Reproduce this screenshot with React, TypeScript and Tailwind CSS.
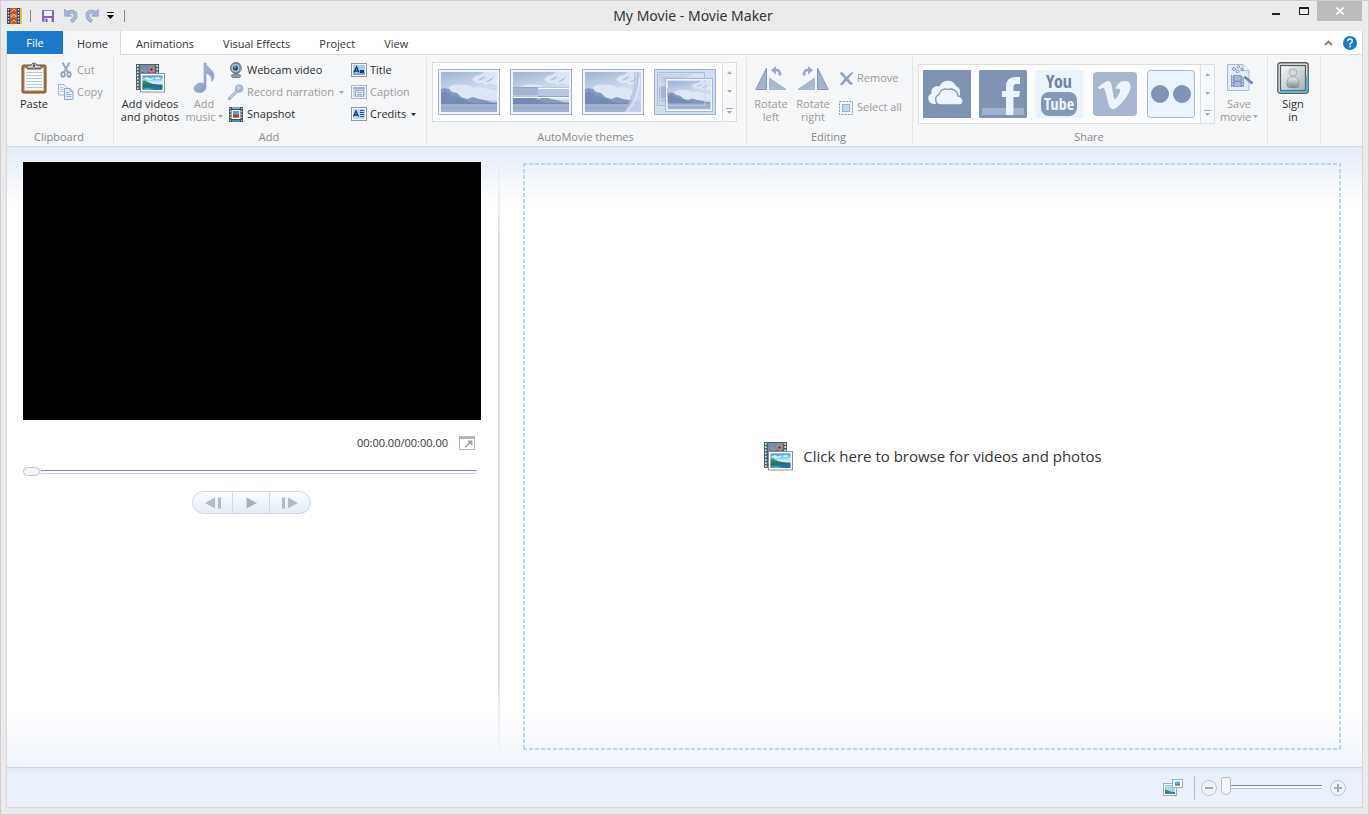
import React from "react";

type Kids = { children?: React.ReactNode };

/* ---------- icons ---------- */

function AppIcon() {
  return (
    <svg width="15" height="16" viewBox="0 0 15 16" aria-hidden="true">
      <rect width="13" height="16" fill="#1d4f86" />
      <rect x="13" width="2" height="16" fill="#f5b93c" />
      <rect x="3" y="0" width="7" height="5" fill="#d8501c" />
      <rect x="3" y="5.5" width="7" height="5" fill="#e8742a" />
      <rect x="3" y="11" width="7" height="5" fill="#d8501c" />
      <path d="M4 4l3-3 2 2M4 9l3-3 2 3M4 15l3-3 2 2" stroke="#ffc04d" fill="none" />
      <path d="M1.5 1v15M11.5 1v15" stroke="#cfe2f5" strokeWidth="1.4" strokeDasharray="1.4 1.6" />
    </svg>
  );
}

function SaveIcon() {
  return (
    <svg width="12" height="12" viewBox="0 0 12 12" aria-hidden="true">
      <path d="M0 0h12v12H1l-1-1z" fill="#8468b5" />
      <rect x="2" y="0.8" width="8" height="5.2" fill="#f2effa" />
      <rect x="2.5" y="8" width="7" height="4" fill="#f2effa" />
      <rect x="3.5" y="8.6" width="2" height="3.4" fill="#7558a8" />
    </svg>
  );
}

function UndoIcon({ flip }: { flip?: boolean }) {
  return (
    <svg width="14" height="15" viewBox="0 0 14 15" className={flip ? "-scale-x-100" : ""} aria-hidden="true">
      <path d="M3 5.500C6 2.500 11.500 3 11.500 7.500c0 3-2 4.500-4.500 5.900" fill="none" stroke="#8fa2c4" strokeWidth="3.800" />
      <path d="M3 5.500C6 2.500 11.500 3 11.500 7.500c0 3-2 4.500-4.500 5.900" fill="none" stroke="#a9bad7" strokeWidth="2.400" />
      <path d="M.6 1v7.200h7z" fill="#a3b4d2" stroke="#8fa2c4" strokeWidth=".7" />
    </svg>
  );
}

function PasteIcon() {
  return (
    <svg width="26" height="32" viewBox="0 0 26 32" aria-hidden="true">
      <rect x="1" y="3" width="24" height="28" rx="1.500" fill="#a9743a" stroke="#7d5223" />
      <rect x="3.500" y="6" width="19" height="22.500" fill="#fbfdff" stroke="#d9c3a0" strokeWidth=".6" />
      <path d="M5 10.500h16M5 13.500h16M5 16.500h16M5 19.500h16M5 22.500h16M5 25.500h16" stroke="#b7c8db" />
      <path d="M6 7V5q0-1.500 2-1.500h2Q10.500 1 13 1t3 2.500h2q2 0 2 1.500v2z" fill="#d6dade" stroke="#5b6168" />
      <circle cx="13" cy="3.600" r="1.300" fill="#4a4f55" />
      <path d="M7 6.200h12" stroke="#4a4f55" />
    </svg>
  );
}

function CutIcon() {
  return (
    <svg width="16" height="16" viewBox="0 0 16 16" aria-hidden="true">
      <path d="M4.500.5L10 10.500M11.500.5L6 10.500" stroke="#9aacc9" strokeWidth="2" fill="none" />
      <ellipse cx="5" cy="12.500" rx="1.700" ry="2.300" fill="none" stroke="#8c9fc0" strokeWidth="1.700" />
      <ellipse cx="11" cy="12.500" rx="1.700" ry="2.300" fill="none" stroke="#8c9fc0" strokeWidth="1.700" />
    </svg>
  );
}

function CopyIcon() {
  return (
    <svg width="16" height="16" viewBox="0 0 16 16" aria-hidden="true">
      <path d="M.5.5H6L9 3.500V11H.5z" fill="#eef3fb" stroke="#a3b4d2" />
      <path d="M2 3.500h3M2 5.500h5M2 7.500h5" stroke="#b5c3dc" />
      <path d="M6.500 4.500H12l3 3v8H6.500z" fill="#e6edf9" stroke="#93a6c9" />
      <path d="M12 4.500v3h3M8 8.500h3M8 10.500h5.500M8 12.500h5.500" stroke="#9fb0cf" fill="none" />
    </svg>
  );
}

function FilmPhotoIcon() {
  return (
    <svg width="29" height="29" viewBox="0 0 29 29" aria-hidden="true">
      <defs>
        <linearGradient id="fpSky" x1="0" y1="0" x2="0" y2="1">
          <stop offset="0" stopColor="#3b90e2" />
          <stop offset=".45" stopColor="#c6ebfb" />
          <stop offset="1" stopColor="#eafaff" />
        </linearGradient>
        <linearGradient id="fpHill" x1="0" y1="0" x2="0" y2="1">
          <stop offset="0" stopColor="#4b9a78" />
          <stop offset="1" stopColor="#1d5a56" />
        </linearGradient>
      </defs>
      <rect x="0" y="0" width="23" height="26" fill="#4c6068" />
      <path d="M1.800 1v25M21.200 1v8" stroke="#d8ecef" strokeWidth="1.600" strokeDasharray="1.700 1.500" />
      <rect x="4" y="1" width="15" height="9" fill="#6d8cb8" />
      <path d="M4 7l4-3.500 4 3v4H4z" fill="#8294a8" />
      <circle cx="15.500" cy="5.500" r="2.800" fill="#d98a3c" />
      <circle cx="15.500" cy="5.500" r="1.300" fill="#48348a" />
      <path d="M4 10l2-2 4 1 3-1 3 1 3-1v2z" fill="#94483a" />
      <rect x="4.500" y="9.500" width="24" height="18.500" fill="#fff" stroke="#8b9297" />
      <rect x="6.500" y="11.500" width="20" height="14.500" fill="url(#fpSky)" />
      <path d="M8 14.500q3-2 5-.5t4-1q2 1-1 2.500t-8-1zM18 14q4-2 7 0-3 2-7 0z" fill="#f0fbff" opacity=".85" />
      <path d="M6.500 16.500q2-.8 4 .7 3 1.800 6 2.500t10 .8v3h-20z" fill="url(#fpHill)" />
      <path d="M6.500 22.800q8-.8 20-.3v3.500h-20z" fill="#217a9f" />
      <path d="M6.500 25.200q6-2 12 .8h-12z" fill="#57b4d2" />
    </svg>
  );
}

function NoteIcon() {
  return (
    <svg width="22" height="32" viewBox="0 0 22 32" aria-hidden="true">
      <defs>
        <linearGradient id="note" x1="0" y1="0" x2="1" y2="1">
          <stop offset="0" stopColor="#b5c3de" />
          <stop offset="1" stopColor="#7e92b8" />
        </linearGradient>
      </defs>
      <path
        d="M11 1h2c.5 4.500 8 7 8 12.500 0 2.500-1 4.500-2.500 6C19.500 13 15 12 13 11.500V25c0 3.500-3 5.500-6.500 5.500C3 30.500 1 29 1 26.500 1 23.500 4.500 21 8 21c1.200 0 2.200.2 3 .7z"
        fill="url(#note)"
        stroke="#8fa1c3"
        strokeWidth=".6"
      />
    </svg>
  );
}

function WebcamIcon() {
  return (
    <svg width="16" height="16" viewBox="0 0 16 16" aria-hidden="true">
      <path d="M3 13.500q5-3.500 10 0l-1.500 2h-7z" fill="#8c99a6" stroke="#56626e" strokeWidth=".6" />
      <circle cx="8" cy="6" r="5.600" fill="#6f8599" stroke="#4b5c6c" strokeWidth=".6" />
      <circle cx="7.500" cy="6" r="4" fill="#b9cbdb" />
      <circle cx="7.500" cy="6" r="2.600" fill="#2f4860" />
      <circle cx="7" cy="5.300" r="1" fill="#7cc0ee" />
      <path d="M12 2q3 3 0 8" fill="none" stroke="#a7b4c0" />
    </svg>
  );
}

function MicIcon() {
  return (
    <svg width="16" height="16" viewBox="0 0 16 16" aria-hidden="true">
      <path d="M1.200 14.800L9 7" stroke="#93a6c9" strokeWidth="3" strokeLinecap="round" />
      <path d="M1.500 14.500L9 7" stroke="#c9d6ec" strokeWidth="1.200" />
      <circle cx="11.200" cy="4.600" r="3.800" fill="#a9b9d8" stroke="#93a6c9" strokeWidth=".8" />
      <circle cx="10.600" cy="3.800" r="1.800" fill="#c6d3ea" />
    </svg>
  );
}

function SnapshotIcon() {
  return (
    <svg width="14" height="15" viewBox="0 0 14 15" aria-hidden="true">
      <rect width="14" height="15" fill="#3c474c" />
      <path d="M1.300.8v14M12.700.8v14" stroke="#cfdfe3" strokeWidth="1.200" strokeDasharray="1.500 1.500" />
      <rect x="3" y="0" width="8" height="2" fill="#7aa7bd" />
      <rect x="2.500" y="3" width="9" height="9" fill="#eaf3fa" />
      <rect x="4" y="4" width="6" height="6.500" fill="#5aa2dd" />
      <path d="M4 8.500l2-2 2 1.500 2-1v3.500H4z" fill="#b7422b" />
      <rect x="3" y="12.800" width="8" height="2.200" fill="#3f8fc2" />
    </svg>
  );
}

function TitleIcon() {
  return (
    <svg width="16" height="14" viewBox="0 0 16 14" aria-hidden="true">
      <rect x=".5" y=".5" width="15" height="13" fill="#fff" stroke="#8e979f" />
      <rect x="2" y="2" width="12" height="10" fill="#9fcdf5" />
      <path d="M3 9.500L5.500 4 8 9.500M4 8h3" fill="none" stroke="#123a72" strokeWidth="1.400" />
      <path d="M9 7h4v3H9z" fill="#123a72" />
      <path d="M2 11h12" stroke="#3f86cd" />
    </svg>
  );
}

function CaptionIcon() {
  return (
    <svg width="16" height="14" viewBox="0 0 16 14" aria-hidden="true">
      <rect x=".5" y=".5" width="15" height="13" fill="#f3f6fc" stroke="#a7b5cf" />
      <rect x="2" y="2" width="12" height="10" fill="#c6d3ea" />
      <path d="M2 3h12" stroke="#93a6c9" strokeWidth="1.500" />
      <rect x="4.500" y="5.500" width="8" height="5.500" fill="#eef3fb" stroke="#98aacb" />
      <path d="M6 7.500h5M6 9.500h5" stroke="#98aacb" />
    </svg>
  );
}

function CreditsIcon() {
  return (
    <svg width="16" height="14" viewBox="0 0 16 14" aria-hidden="true">
      <rect x=".5" y=".5" width="15" height="13" fill="#fff" stroke="#8e979f" />
      <rect x="2" y="2" width="12" height="10" fill="#b4daf8" />
      <path d="M2.500 9.500L5 4l2.500 5.500M3.500 8h3" fill="none" stroke="#123a72" strokeWidth="1.300" />
      <path d="M9 3.500h4M9 5.500h4M9 7.500h4M9 9.500h4" stroke="#23518f" />
    </svg>
  );
}

type ThemeKind = "plain" | "split" | "curl" | "stack";

function Scene({ id }: { id: string }) {
  return (
    <>
      <rect width="56" height="40" fill={`url(#${id}-sky)`} />
      <g clipPath={`url(#${id}-clip)`}>
        <g filter={`url(#${id}-soft)`}>
          <path d="M31 7q3-4 8-4 5-5 10-4h9v13q-5 2-9-1-4 3-8 0-7 1-10-4z" fill="#eaf0fb" opacity=".7" />
          <path d="M38 8l6-3M46 10l6-4" stroke="#aebede" strokeWidth="1.500" />
          <path d="M8 15q6-4 12-2 8-1 12 3 8-2 14 1 6 0 12 3v8H8z" fill="#e3ebf8" opacity=".8" />
          <path d="M-2 18l5-2 5 1 3 3 5 1 4 4 6 2 6-2 6 2 6 1 6 2 8 1v2H-2z" fill="#8598c0" />
          <path d="M-2 21l7-1 6 4 8 2 8 3 6 2-36 1z" fill="#6f84b2" opacity=".7" />
          <path d="M-2 31.500h60V42H-2z" fill="#a3b2d2" />
          <path d="M-2 31.500h60" stroke="#7488b4" strokeWidth="1" />
          <path d="M-2 36h60" stroke="#93a4c8" strokeWidth="1" />
        </g>
      </g>
    </>
  );
}

function ThemeThumb({ kind }: { kind: ThemeKind }) {
  const id = `theme-${kind}`;
  return (
    <svg width="62" height="46" viewBox="0 0 62 46" aria-hidden="true">
      <defs>
        <linearGradient id={`${id}-sky`} x1="0" y1="0" x2=".3" y2="1">
          <stop offset="0" stopColor="#a0b1d2" />
          <stop offset=".55" stopColor="#d2dcef" />
          <stop offset="1" stopColor="#c3cfe6" />
        </linearGradient>
        <clipPath id={`${id}-clip`}>
          <rect width="56" height="40" />
        </clipPath>
        <filter id={`${id}-soft`}>
          <feGaussianBlur stdDeviation=".6" />
        </filter>
      </defs>
      <rect x=".5" y=".5" width="61" height="45" fill={kind === "stack" ? "#d2def1" : "#edf3fe"} stroke="#a0b2d0" />
      {kind !== "stack" && (
        <g transform="translate(3 3)">
          <Scene id={id} />
        </g>
      )}
      {kind === "split" && (
        <>
          <rect x="3" y="18" width="56" height="10" fill="#b9c7e0" />
          <rect x="3" y="18" width="25" height="8" fill="#a5b4d3" />
          <path d="M28 19.500h31M3 28.500h56" stroke="#f4f8ff" />
          <path d="M3 18.500h25M28 27.500h31" stroke="#93a5cb" />
        </>
      )}
      {kind === "curl" && (
        <>
          <path d="M54 3Q54 27 42 43h17V3z" fill="#c7d4ec" opacity=".85" />
          <path d="M56 3Q56 27 42 43M53 3q1 22-11 40" fill="none" stroke="#a9b8d8" />
          <path d="M58 8q-1 22-13 35" fill="none" stroke="#e8effc" />
        </>
      )}
      {kind === "stack" && (
        <>
          <g transform="translate(5 5) scale(.82 .74)" opacity=".5">
            <Scene id={id} />
          </g>
          <path d="M3.500 3.500h47v33h-47z" fill="none" stroke="#abbbdc" />
          <path d="M6.500 6.500h41v27h-41z" fill="none" stroke="#dfe8f8" opacity=".6" />
          <g transform="translate(14 12) scale(.76 .7)">
            <Scene id={id} />
          </g>
          <rect x="12.500" y="10.500" width="45" height="31" fill="none" stroke="#eef4ff" strokeWidth="1.500" />
          <rect x="11.500" y="9.500" width="47" height="33" fill="none" stroke="#9aacd1" strokeWidth=".8" />
          <path d="M14 36.500h37V12" fill="none" stroke="#c6d3ea" opacity=".7" />
        </>
      )}
    </svg>
  );
}

function RotateIcon({ right }: { right?: boolean }) {
  return (
    <svg width="32" height="26" viewBox="0 0 32 26" className={right ? "-scale-x-100" : ""} aria-hidden="true">
      <path d="M.8 24.500L11.500 3v21.500z" fill="#a3b3d1" stroke="#8497bb" />
      <path d="M14.500 13v11.500H31z" fill="#a9b9d6" stroke="#9aabcb" strokeWidth=".8" />
      <path d="M20 5q5.500-.5 5 5.500" fill="none" stroke="#97a9ca" strokeWidth="2.800" />
      <path d="M16 5.200L21 1v8.500z" fill="#97a9ca" />
    </svg>
  );
}

function RemoveIcon() {
  return (
    <svg width="15" height="15" viewBox="0 0 15 15" aria-hidden="true">
      <path d="M.5 2Q3 .2 4.500 2.500L7.500 6Q10.500 2 14 .8q.6.700 0 1.400Q11 5 9.300 7.800q2 3 4.700 4.700-1.500 2.300-3.500.7L7.400 9.800 3.500 14Q1.500 14.800.8 13.500 3.500 11 5.500 7.600z" fill="#8fa2c4" />
    </svg>
  );
}

function SelectAllIcon() {
  return (
    <svg width="14" height="14" viewBox="0 0 14 14" aria-hidden="true">
      <rect x=".5" y=".5" width="13" height="13" fill="none" stroke="#8093b8" strokeDasharray="2 1.200" />
      <rect x="3.500" y="3.500" width="7" height="7" fill="#c7d6f0" stroke="#9db0d3" />
    </svg>
  );
}

function CloudTile() {
  return (
    <svg width="48" height="48" viewBox="0 0 48 48" aria-hidden="true">
      <rect width="48" height="48" fill="#8092b4" />
      <path d="M13 34H10.500a5.500 5.500 0 0 1-2-10.500 6 6 0 0 1 8-7 9 9 0 0 1 16.500-.5 7 7 0 0 1 4 8V34z" fill="#edf4ff" />
      <path d="M17.500 35a5.500 5.500 0 0 1-1.500-10.500 6.500 6.500 0 0 1 9-5 7.500 7.500 0 0 1 10 6.500 5 5 0 0 1 3 9z" fill="#edf4ff" stroke="#8092b4" strokeWidth="1.300" />
    </svg>
  );
}

function FacebookTile() {
  return (
    <svg width="48" height="48" viewBox="0 0 48 48" aria-hidden="true">
      <rect width="48" height="48" rx="1.500" fill="#8294b6" />
      <rect x="3" y="38" width="42" height="7" fill="#a3b2cd" />
      <path d="M27 45V27h-4v-6h4v-4q0-10 9-10h5v7h-4q-2.500 0-2.500 3v4h6.500l-1 6h-5.500v18z" fill="#edf4ff" />
    </svg>
  );
}

function YouTubeTile() {
  return (
    <span className="flex h-12 w-12 flex-col items-center bg-[#ebf3ff] font-['Open_Sans_Condensed','Liberation_Sans_Narrow',sans-serif] font-bold">
      <span className="h-[22px] text-[18px] leading-[22px] text-[#7083a8]">You</span>
      <span className="flex h-6 w-9 items-center justify-center rounded-lg bg-[#8698b9] text-[16px] leading-[22px] text-[#edf4ff]">
        Tube
      </span>
    </span>
  );
}

function VimeoTile() {
  return (
    <svg width="44" height="44" viewBox="0 0 44 44" aria-hidden="true">
      <rect width="44" height="44" rx="4" fill="#a7b6d1" />
      <path
        d="M5 15.500l1.500 2q2.500-1.700 3.500-1.700c2 0 3 7 4.500 12.500 1.300 5 2.500 9 5.500 9 5 0 17-15 17.500-21.500C38 10 35 9 31.500 9c-5.500.2-8 4.500-9 8 3.500-1.500 5.500.3 4.300 3.200-1 2.500-3.500 7-4.800 7s-2-6-2.800-11C18.500 12 18 8.500 14.500 9 11.500 9.500 8 13 5 15.500z"
        fill="#edf4ff"
      />
    </svg>
  );
}

function FlickrTile() {
  return (
    <svg width="48" height="48" viewBox="0 0 48 48" aria-hidden="true">
      <rect x=".5" y=".5" width="47" height="47" rx="3" fill="#ebf3ff" stroke="#a5b8d6" />
      <circle cx="13" cy="24" r="9" fill="#8193b6" />
      <circle cx="35" cy="24" r="9" fill="#8193b6" />
    </svg>
  );
}

function SaveMovieIcon() {
  return (
    <svg width="28" height="30" viewBox="0 0 28 30" aria-hidden="true">
      <path d="M2.500 1.500H18l6 6v20H2.500z" fill="#e3ecf9" stroke="#a9bad8" />
      <path d="M18 1.500v6h6" fill="#f5f9ff" stroke="#a9bad8" />
      <rect x="6" y="12" width="13" height="12" fill="#8496bb" />
      <path d="M7.500 12v12M17.500 12v12" stroke="#dfe9f8" strokeWidth="1.300" strokeDasharray="1.400 1.400" />
      <rect x="9.500" y="13" width="6" height="4.500" fill="#a9b9d8" />
      <rect x="9.500" y="19" width="6" height="4.500" fill="#a9b9d8" />
      <path d="M18 12.500l9.500 8" stroke="#7286ad" strokeWidth="2.600" />
      <path d="M17 11.500l2.500 2" stroke="#f0f5ff" strokeWidth="2.400" />
      <g fill="none" stroke="#8195bd" strokeWidth="1">
        <circle cx="9" cy="6" r="1.500" />
        <circle cx="13.500" cy="3.800" r="1.200" />
        <circle cx="12.500" cy="8.500" r="1.500" />
        <circle cx="17" cy="6.500" r="1.300" />
      </g>
    </svg>
  );
}

function SignInIcon() {
  return (
    <svg width="32" height="32" viewBox="0 0 32 32" aria-hidden="true">
      <defs>
        <linearGradient id="userBg" x1="0" y1="0" x2="1" y2="1">
          <stop offset="0" stopColor="#f6f7f8" />
          <stop offset="1" stopColor="#a9b2b7" />
        </linearGradient>
        <linearGradient id="user" x1="0" y1="0" x2="0" y2="1">
          <stop offset="0" stopColor="#eceff1" />
          <stop offset="1" stopColor="#7d878d" />
        </linearGradient>
      </defs>
      <rect x=".8" y=".8" width="30.400" height="30.400" rx="2.500" fill="#dfe2e4" stroke="#5d6468" strokeWidth="1.400" />
      <rect x="3.500" y="3.500" width="25" height="25" fill="url(#userBg)" stroke="#555c60" strokeWidth="1.200" />
      <path d="M3 29.500h26.500V14" fill="none" stroke="#37c3dc" strokeWidth="1.400" />
      <path d="M10.500 25q-2-5 .5-8 2-2 5-2t5 2q2.500 3 .5 8-5.500 2-11 0z" fill="url(#user)" stroke="#838d93" strokeWidth=".6" />
      <circle cx="16" cy="10.500" r="3.800" fill="#d3d8dc" stroke="#838d93" strokeWidth=".6" />
    </svg>
  );
}

function FullscreenIcon() {
  return (
    <svg width="16" height="14" viewBox="0 0 16 14" aria-hidden="true">
      <rect x=".5" y=".5" width="15" height="13" fill="#fff" stroke="#b3b6b9" />
      <rect width="16" height="3" fill="#b3b6b9" />
      <path d="M6 11.500l5-5" stroke="#9fa3a7" strokeWidth="1.600" />
      <path d="M8 4.500h5.500V10z" fill="#9fa3a7" />
    </svg>
  );
}

function ThumbSizeIcon() {
  return (
    <svg width="20" height="17" viewBox="0 0 20 17" aria-hidden="true">
      <rect x=".5" y="4.500" width="13" height="12" fill="#fff" stroke="#a4a9ae" />
      <rect x="2" y="6" width="10" height="9" fill="#a8d8f8" />
      <path d="M2 11q3-.5 5 1.500l5 .5v2H2z" fill="#3f8069" />
      <path d="M2 14h10v1H2z" fill="#3d8cc4" />
      <rect x="9.500" y=".5" width="10" height="8" fill="#fff" stroke="#a4a9ae" />
      <rect x="12" y="2.500" width="5" height="4" fill="#64a9e0" />
      <path d="M12 5.500h5v1h-5z" fill="#3f8069" />
    </svg>
  );
}

function Caret({ className }: { className: string }) {
  return (
    <svg width="5" height="3" viewBox="0 0 5 3" className={className} fill="currentColor" aria-hidden="true">
      <path d="M0 0h5L2.500 3z" />
    </svg>
  );
}

/* ---------- ribbon parts ---------- */

function Group({ label, className, children }: Kids & { label: string; className: string }) {
  return (
    <section
      aria-label={label || "Account"}
      className={`my-0.5 flex shrink-0 flex-col border-r border-[#e2e3e4] pt-0.5 ${className}`}
    >
      <div className="flex flex-1 items-start">{children}</div>
      <div className="h-3.5 pr-0.5 text-center leading-3.5 text-[#8a8a8a]">{label}</div>
    </section>
  );
}

function BigButton({
  icon,
  first,
  second,
  caret,
  disabled,
  className,
}: {
  icon: React.ReactNode;
  first: string;
  second?: string;
  caret?: boolean;
  disabled?: boolean;
  className: string;
}) {
  return (
    <button
      type="button"
      disabled={disabled}
      className={`flex shrink-0 flex-col items-center whitespace-nowrap pt-[3px] leading-[13px] text-[#2b2b2b] disabled:text-[#9b9b9b] ${className}`}
    >
      <span className="mb-[3px] flex h-8 items-center justify-center">{icon}</span>
      <span>{first}</span>
      {second && (
        <span className="flex items-center gap-0.5">
          {second}
          {caret && <Caret className="text-[#a8a8a8]" />}
        </span>
      )}
    </button>
  );
}

function SmallButton({
  icon,
  label,
  caret,
  disabled,
  tall,
}: {
  icon: React.ReactNode;
  label: string;
  caret?: boolean;
  disabled?: boolean;
  tall?: boolean;
}) {
  return (
    <button
      type="button"
      disabled={disabled}
      className={`flex items-center whitespace-nowrap text-[#2b2b2b] disabled:text-[#9b9b9b] ${tall ? "h-[29px]" : "h-[22px]"}`}
    >
      <span className="mr-[3px] flex w-4 justify-center">{icon}</span>
      {label}
      {caret && <Caret className={disabled ? "ml-[5px] text-[#a8a8a8]" : "ml-[5px] text-[#2b2b2b]"} />}
    </button>
  );
}

function Gallery({ name, className, children }: Kids & { name: string; className: string }) {
  return (
    <div className={`flex h-[60px] border border-[#dcdddf] bg-[#fdfdfd] ${className}`}>
      <div className="flex flex-1 items-center">{children}</div>
      <div className="flex w-[14px] flex-col border-l border-[#dcdddf] bg-[#f7f8f9] text-[#a3abb3]">
        <button type="button" aria-label={`${name}: previous row`} className="flex flex-1 items-center justify-center">
          <Caret className="rotate-180" />
        </button>
        <button type="button" aria-label={`${name}: next row`} className="flex flex-1 items-center justify-center">
          <Caret className="" />
        </button>
        <button type="button" aria-label={`${name}: show all`} className="flex flex-1 flex-col items-center justify-center gap-0.5">
          <span className="h-px w-[7px] bg-[#a3abb3]" />
          <Caret className="" />
        </button>
      </div>
    </div>
  );
}

/* ---------- page sections ---------- */

function TitleBar() {
  return (
    <header className="flex h-[30px] items-start">
      <div className="flex h-[29px] w-[118px] shrink-0 items-center">
        <AppIcon />
        <span className="ml-2 h-3 w-px bg-[#8c8c8c]" />
        <button type="button" aria-label="Save project" className="ml-[11px]"><SaveIcon /></button>
        <button type="button" aria-label="Undo" className="ml-2.5"><UndoIcon /></button>
        <button type="button" aria-label="Redo" className="ml-[7px]"><UndoIcon flip /></button>
        <button type="button" aria-label="Customize Quick Access Toolbar" className="ml-2 flex flex-col items-center gap-0.5 text-black">
          <span className="h-px w-[7px] bg-black" />
          <svg width="7" height="4" viewBox="0 0 7 4" aria-hidden="true"><path d="M0 0h7L3.500 4z" /></svg>
        </button>
        <span className="ml-2.5 h-3 w-px shrink-0 bg-[#8c8c8c]" />
      </div>
      <h1 className="flex-1 text-center font-['Noto_Sans','Open_Sans',sans-serif] text-sm leading-[29px] text-[#333]">My Movie - Movie Maker</h1>
      <div className="flex shrink-0">
        <button type="button" aria-label="Minimize" className="flex h-5 w-[29px] justify-center pt-3">
          <span className="h-[2px] w-2 bg-[#222]" />
        </button>
        <button type="button" aria-label="Maximize" className="flex h-5 w-[27px] justify-center pt-1.5">
          <span className="h-2 w-2.5 border border-t-2 border-[#222]" />
        </button>
        <button type="button" aria-label="Close" className="flex h-5 w-[45px] items-center justify-center bg-[#bcbcbc]">
          <svg width="8" height="8" viewBox="0 0 8 8" aria-hidden="true">
            <path d="M.5.5l7 7M7.500.5l-7 7" stroke="#fff" strokeWidth="1.600" />
          </svg>
        </button>
      </div>
    </header>
  );
}

function TabRow() {
  return (
    <nav className="flex h-6 bg-white text-[#333]">
      <button type="button" className="h-[23px] w-14 bg-[#1979ca] pt-0.5 text-white">File</button>
      <button type="button" aria-current="page" className="w-[58px] border-r border-[#dadbdc] bg-[#f5f6f7] pl-0.5 pt-0.5">Home</button>
      <div className="flex flex-1 border-b border-[#dadbdc] pl-px">
        {["Animations", "Visual Effects", "Project", "View"].map((tab) => (
          <button type="button" key={tab} className="pl-3.5 pr-[15px] pt-1">{tab}</button>
        ))}
        <button type="button" aria-label="Minimize the Ribbon" className="ml-auto px-2.5">
          <svg width="9" height="6" viewBox="0 0 9 6" aria-hidden="true">
            <path d="M1 5l3.500-3.500L8 5" fill="none" stroke="#808080" strokeWidth="1.800" />
          </svg>
        </button>
        <button type="button" aria-label="Help" className="mr-[5px]">
          <svg width="14" height="14" viewBox="0 0 14 14" aria-hidden="true">
            <circle cx="7" cy="7" r="7" fill="#1979ca" />
            <path d="M4.700 5.200Q4.700 3 7 3t2.300 2Q9.300 6.200 8 7 7 7.600 7 8.700" fill="none" stroke="#fff" strokeWidth="1.500" />
            <rect x="6.200" y="9.800" width="1.600" height="1.600" fill="#fff" />
          </svg>
        </button>
      </div>
    </nav>
  );
}

const themes: ThemeKind[] = ["plain", "split", "curl", "stack"];

const shares = [
  { name: "OneDrive", tile: <CloudTile /> },
  { name: "Facebook", tile: <FacebookTile /> },
  { name: "YouTube", tile: <YouTubeTile /> },
  { name: "Vimeo", tile: <VimeoTile /> },
  { name: "Flickr", tile: <FlickrTile /> },
];

function Ribbon() {
  return (
    <div className="flex h-[92px] overflow-hidden border-b border-[#d5d9de] bg-[#f5f6f7]">
      <Group label="Clipboard" className="w-[107px]">
        <BigButton icon={<PasteIcon />} first="Paste" className="ml-1 w-[46px]" />
        <div className="ml-px flex flex-col">
          <SmallButton icon={<CutIcon />} label="Cut" disabled />
          <SmallButton icon={<CopyIcon />} label="Copy" disabled />
        </div>
      </Group>
      <Group label="Add" className="w-[313px]">
        <BigButton icon={<FilmPhotoIcon />} first="Add videos" second="and photos" className="ml-1 w-16" />
        <BigButton icon={<NoteIcon />} first="Add" second="music" caret disabled className="w-11" />
        <div className="ml-0.5 flex w-[123px] flex-col">
          <SmallButton icon={<WebcamIcon />} label="Webcam video" />
          <SmallButton icon={<MicIcon />} label="Record narration" caret disabled />
          <SmallButton icon={<SnapshotIcon />} label="Snapshot" />
        </div>
        <div className="flex flex-col">
          <SmallButton icon={<TitleIcon />} label="Title" />
          <SmallButton icon={<CaptionIcon />} label="Caption" disabled />
          <SmallButton icon={<CreditsIcon />} label="Credits" caret />
        </div>
      </Group>
      <Group label="AutoMovie themes" className="w-80">
        <Gallery name="AutoMovie themes" className="ml-[5px] mt-[3px] w-[305px]">
          <div className="flex gap-2.5 pl-[5px]">
            {themes.map((kind) => (
              <button type="button" key={kind} aria-label={`Theme ${kind}`}><ThemeThumb kind={kind} /></button>
            ))}
          </div>
        </Gallery>
      </Group>
      <Group label="Editing" className="w-[166px]">
        <BigButton icon={<RotateIcon />} first="Rotate" second="left" disabled className="ml-[3px] w-[42px]" />
        <BigButton icon={<RotateIcon right />} first="Rotate" second="right" disabled className="w-[42px]" />
        <div className="ml-1 mt-[5px] flex flex-col">
          <SmallButton icon={<RemoveIcon />} label="Remove" disabled tall />
          <SmallButton icon={<SelectAllIcon />} label="Select all" disabled tall />
        </div>
      </Group>
      <Group label="Share" className="w-[355px]">
        <Gallery name="Share" className="ml-[5px] mt-[5px] w-[297px]">
          <div className="flex gap-2 pl-1">
            {shares.map((s) => (
              <button type="button" key={s.name} aria-label={s.name} className="flex h-12 w-12 items-center justify-center">
                {s.tile}
              </button>
            ))}
          </div>
        </Gallery>
        <BigButton icon={<SaveMovieIcon />} first="Save" second="movie" caret disabled className="w-12" />
      </Group>
      <Group label="" className="w-[53px]">
        <BigButton icon={<SignInIcon />} first="Sign" second="in" className="w-[50px]" />
      </Group>
    </div>
  );
}

function Preview() {
  return (
    <section aria-label="Preview" className="flex w-[491px] shrink-0 flex-col pl-4 pr-[17px] pt-[15px]">
      <div className="h-[258px] bg-black" />
      <div className="mt-3.5 flex h-[18px] items-center justify-end gap-[11px] pr-1.5 text-[#333]">
        <span>00:00.00/00:00.00</span>
        <button type="button" aria-label="View full screen"><FullscreenIcon /></button>
      </div>
      <input
        type="range"
        aria-label="Playback position"
        defaultValue={0}
        className="mr-1 mt-3.5 h-3 appearance-none bg-transparent [&::-webkit-slider-runnable-track]:h-1 [&::-webkit-slider-runnable-track]:rounded-sm [&::-webkit-slider-runnable-track]:border-b [&::-webkit-slider-runnable-track]:border-t [&::-webkit-slider-runnable-track]:border-b-[#cfcfdb] [&::-webkit-slider-runnable-track]:border-t-[#8583b0] [&::-webkit-slider-runnable-track]:bg-white [&::-webkit-slider-thumb]:-mt-[4px] [&::-webkit-slider-thumb]:h-[9px] [&::-webkit-slider-thumb]:w-[17px] [&::-webkit-slider-thumb]:appearance-none [&::-webkit-slider-thumb]:rounded-full [&::-webkit-slider-thumb]:border [&::-webkit-slider-thumb]:border-[#bac4d6] [&::-webkit-slider-thumb]:bg-[#f4f5f7] [&::-webkit-slider-thumb]:shadow-[0_0_0_1px_#fff]"
      />
      <div className="mr-px mt-[13px] flex h-[23px] w-[119px] self-center divide-x divide-[#cbd9e8] overflow-hidden rounded-full border border-[#cbd5e3] bg-linear-to-b from-[#fbfcfe] to-[#e4ecf7]">
        <button type="button" aria-label="Previous frame" className="flex w-10 items-center justify-center">
          <svg width="16" height="12" viewBox="0 0 16 12" fill="#b4bbc2" aria-hidden="true"><path d="M0 6L10 .5v11zM13 .5h3v11h-3z" /></svg>
        </button>
        <button type="button" aria-label="Play" className="flex flex-1 items-center justify-center">
          <svg width="11" height="12" viewBox="0 0 11 12" fill="#a9b2bb" aria-hidden="true"><path d="M.5.5L11 6 .5 11.500z" /></svg>
        </button>
        <button type="button" aria-label="Next frame" className="flex w-10 items-center justify-center">
          <svg width="16" height="12" viewBox="0 0 16 12" fill="#b4bbc2" aria-hidden="true"><path d="M16 6L6 .5v11zM0 .5h3v11H0z" /></svg>
        </button>
      </div>
    </section>
  );
}

function StatusBar() {
  return (
    <footer className="flex h-10 items-center justify-end border-t border-[#c9d5e2] bg-linear-to-b from-[#dfe8f3] from-0% via-[#e9f0f9] via-15% to-[#eaf1fa] pr-4">
      <button type="button" aria-label="Change thumbnail size"><ThumbSizeIcon /></button>
      <span className="ml-[11px] h-6 w-px bg-[#a9bedb]" />
      <button type="button" aria-label="Zoom out" className="ml-1.5">
        <svg width="16" height="16" viewBox="0 0 16 16" aria-hidden="true">
          <circle cx="8" cy="8" r="7.500" fill="#eef3fa" stroke="#bac6d8" />
          <path d="M4 8h8" stroke="#a2abb6" strokeWidth="2" />
        </svg>
      </button>
      <input
        type="range"
        aria-label="Zoom time scale"
        defaultValue={0}
        className="mb-0.5 ml-1 h-5 w-[101px] appearance-none bg-transparent [&::-webkit-slider-runnable-track]:h-1 [&::-webkit-slider-runnable-track]:border-b [&::-webkit-slider-runnable-track]:border-t [&::-webkit-slider-runnable-track]:border-b-[#bcc3d2] [&::-webkit-slider-runnable-track]:border-t-[#8583b0] [&::-webkit-slider-runnable-track]:bg-[#f5f8fc] [&::-webkit-slider-thumb]:-mt-[9px] [&::-webkit-slider-thumb]:h-[18px] [&::-webkit-slider-thumb]:w-2.5 [&::-webkit-slider-thumb]:appearance-none [&::-webkit-slider-thumb]:rounded-b-[5px] [&::-webkit-slider-thumb]:rounded-t-[2px] [&::-webkit-slider-thumb]:border [&::-webkit-slider-thumb]:border-[#b4bbc7] [&::-webkit-slider-thumb]:bg-[#f6f6f8]"
      />
      <button type="button" aria-label="Zoom in" className="ml-2">
        <svg width="16" height="16" viewBox="0 0 16 16" aria-hidden="true">
          <circle cx="8" cy="8" r="7.500" fill="#eef3fa" stroke="#bac6d8" />
          <path d="M4 8h8M8 4v8" stroke="#a2abb6" strokeWidth="2" />
        </svg>
      </button>
    </footer>
  );
}

export default function App() {
  return (
    <div className="flex min-h-screen flex-col border border-[#cfcfcf] bg-[#ebebeb] px-[5px] pb-1.5 font-['Open_Sans','Noto_Sans',sans-serif] text-[11px]">
      <div className="px-px"><TitleBar /></div>
      <div className="flex flex-1 flex-col border border-t-0 border-[#d5d6d8]">
        <TabRow />
        <Ribbon />
        <main className="flex flex-1 bg-[linear-gradient(to_bottom,#e2ebf6_0px,#ffffff_56px,#ffffff_calc(100%-56px),#f0f5fb_100%)]">
          <Preview />
          <div className="my-2 w-[3px] bg-linear-to-r from-[#cfcfd2] to-white mask-[linear-gradient(to_bottom,transparent,black_15%,black_85%,transparent)]" />
          <section aria-label="Storyboard" className="flex flex-1 pb-[17px] pl-[22px] pr-[21px] pt-4">
            <button
              type="button"
              className="flex flex-1 items-center justify-center gap-2.5 bg-no-repeat pl-0.5 text-[15px] text-[#333] [background-image:repeating-linear-gradient(to_right,#b9d5fa_0px_4px,transparent_4px_6px),repeating-linear-gradient(to_right,#b9d5fa_0px_4px,transparent_4px_6px),repeating-linear-gradient(to_bottom,#b9d5fa_0px_4px,transparent_4px_6px),repeating-linear-gradient(to_bottom,#b9d5fa_0px_4px,transparent_4px_6px)] [background-position:top,bottom,left,right] [background-size:100%_2px,100%_2px,2px_100%,2px_100%]"
            >
              <FilmPhotoIcon />
              Click here to browse for videos and photos
            </button>
          </section>
        </main>
        <StatusBar />
      </div>
    </div>
  );
}
